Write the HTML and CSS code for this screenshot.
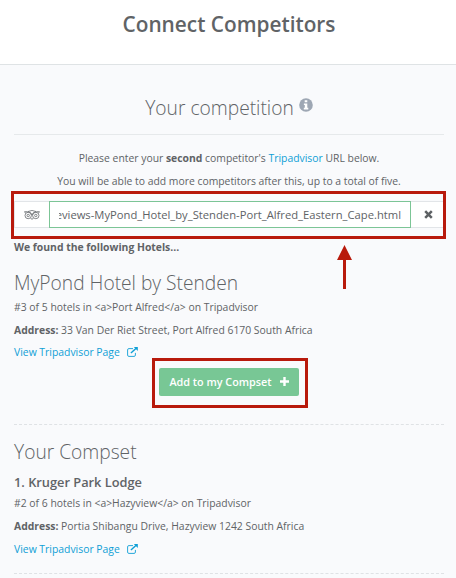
FILE: index.html
```html
<!DOCTYPE html>
<html lang="en">
<head>
<meta charset="utf-8">
<title>Connect Competitors</title>
<link rel="stylesheet" href="styles.css">
</head>
<body>
<svg class="defs" width="0" height="0" aria-hidden="true">
  <symbol id="external" viewBox="0 0 11 10">
    <path d="M6 1.6H1.9Q.6 1.6.6 2.9v5.2q0 1.3 1.3 1.3h5.2q1.3 0 1.3-1.3V5.9" fill="none" stroke="currentColor" stroke-width=".9"/>
    <path d="M3.9 6.1 9.2 1.2" fill="none" stroke="currentColor" stroke-width="1.4"/>
    <path d="M6.8 0h4v4z" fill="currentColor"/>
  </symbol>
</svg>
<header class="header"><h1 class="title">Connect Competitors</h1></header>
<main class="content">
  <h2 class="heading competition"><span>Your competition</span>
    <svg class="info" viewBox="0 0 14 14"><circle cx="7" cy="7" r="6.8" fill="#9ea7b4"/><path d="M5.7 2.3h2.6v2H5.7zM4.9 5.5h3.4v4.3h1v1.6H4.8V9.8h1V7h-.9z" fill="#fff"/></svg>
  </h2>
  <p class="text intro">Please enter your <b>second</b> competitor's <a class="link">Tripadvisor</a> URL below.</p>
  <p class="text intro">You will be able to add more competitors after this, up to a total of five.</p>
  <div class="url-row">
    <span class="addon owl">
      <svg width="16" height="10" viewBox="0 0 16 10" fill="none" stroke="#666a6d">
        <path d="M.5 1.7h3Q8-.8 12.5 1.7h3l-1 1.4M.5 1.7l1 1.4M4 1.7Q7.4 2.2 8 5.1 8.6 2.2 12 1.7M6.7 8 8 9.5 9.3 8" stroke-width=".8"/>
        <circle cx="4.2" cy="5.5" r="3.2" stroke-width=".8"/><circle cx="11.8" cy="5.5" r="3.2" stroke-width=".8"/>
        <circle cx="4.2" cy="5.5" r="1.2" stroke-width=".8"/><circle cx="11.8" cy="5.5" r="1.2" stroke-width=".8"/>
      </svg>
    </span>
    <div class="input"><div class="value"><span>eviews-MyPond_Hotel_by_Stenden-Port_Alfred_Eastern_Cape.html</span></div></div>
    <span class="addon clear">
      <svg width="9" height="9" viewBox="0 0 9 9"><path d="M1.2 1.2l6.6 6.6M7.8 1.2 1.2 7.8" stroke="#5d6164" stroke-width="2.5"/></svg>
    </span>
    <div class="mark mark-url"></div>
    <svg class="arrow" viewBox="0 0 15 44"><path d="M7.5 0 15 15H9v29H6V15H0z" fill="#b81a0c"/></svg>
  </div>
  <p class="text found"><b>We found the following Hotels...</b></p>
  <section class="hotel">
    <h2 class="heading">MyPond Hotel by Stenden</h2>
    <p class="text rank">#3 of 5 hotels in &lt;a&gt;Port Alfred&lt;/a&gt; on Tripadvisor</p>
    <p class="text address"><b>Address:</b> 33 Van Der Riet Street, Port Alfred 6170 South Africa</p>
    <p class="text view"><a class="link">View Tripadvisor Page</a><svg class="external"><use href="#external"/></svg></p>
    <div class="button-row">
      <div class="button-wrap">
        <button class="button">Add to my Compset<svg width="9" height="9" viewBox="0 0 9 9"><path d="M4.5 0v9M0 4.5h9" stroke="#fff" stroke-width="2.4"/></svg></button>
        <div class="mark mark-button"></div>
      </div>
    </div>
  </section>
  <section class="compset">
    <h2 class="heading">Your Compset</h2>
    <h3 class="name">1. Kruger Park Lodge</h3>
    <p class="text rank">#2 of 6 hotels in &lt;a&gt;Hazyview&lt;/a&gt; on Tripadvisor</p>
    <p class="text address"><b>Address:</b> Portia Shibangu Drive, Hazyview 1242 South Africa</p>
    <p class="text view"><a class="link">View Tripadvisor Page</a><svg class="external"><use href="#external"/></svg></p>
  </section>
</main>
</body>
</html>
```
FILE: styles.css
```css
* { box-sizing: border-box; }
body {
  margin: 0;
  height: 578px;
  overflow: hidden;
  background: #f9fafc;
  color: #606366;
  font-family: "Open Sans", sans-serif;
}
h1, h2, h3, p { margin: 0; white-space: nowrap; }
.defs { position: absolute; }
.header { height: 65px; background: #fff; border-bottom: 1px solid #dfe3e5; padding-top: 9px; }
.title { font-size: 20.8px; line-height: 30px; font-weight: 600; text-align: center; padding-left: 2px; }
.content { padding: 0 12px 0 14px; }
.heading { font-size: 19.2px; line-height: 28px; font-weight: 300; }
.competition {
  display: flex;
  justify-content: center;
  height: 70px;
  padding-top: 29px;
  gap: 5px;
  border-bottom: 1px solid #e6e9eb;
  margin-bottom: 12px;
}
.info { width: 14px; height: 14px; margin-top: 4px; }
.text { font-size: 10.38px; line-height: 23px; }
.intro { text-align: center; }
.link { color: #0f9fd6; }
.url-row { position: relative; display: flex; height: 27px; margin-top: 8px; }
.addon {
  display: flex;
  align-items: center;
  justify-content: center;
  width: 35px;
  background: #fff;
  border: 1px solid #e2e5e8;
}
.owl { border-right: 0; }
.clear { width: 33px; border-left: 0; padding-left: 3px; }
.input { flex: 1; min-width: 0; background: #fff; border: 1px solid #7cc596; padding: 0 9px; font-size: 11.22px; line-height: 26px; }
.value { display: flex; justify-content: flex-end; overflow: hidden; white-space: nowrap; }
.mark { position: absolute; border: 3px solid #b81a0c; }
.mark-url { left: -3px; top: -10px; width: 435px; height: 48px; }
.arrow { position: absolute; left: 323px; top: 44px; width: 15px; height: 44px; }
.found { padding-top: 8px; }
.hotel { height: 166px; padding-top: 10px; border-bottom: 1px dashed #dfe2e5; }
.rank { margin-top: -1px; }
.view { display: flex; align-items: center; }
.hotel .view { margin-top: -1px; }
.external { width: 11px; height: 10px; margin-left: 7px; margin-top: -1px; color: #0f9fd6; }
.button-row { display: flex; justify-content: center; margin-top: 4px; }
.button-wrap { position: relative; }
.button {
  display: flex;
  align-items: center;
  justify-content: center;
  gap: 8px;
  width: 140px;
  height: 28px;
  padding: 0 0 1px;
  border: 0;
  border-radius: 2px;
  background: #78c795;
  color: #fff;
  font: 600 10.8px "Open Sans", sans-serif;
  white-space: nowrap;
}
.mark-button { left: -7px; top: -10px; width: 156px; height: 50px; }
.compset { height: 149px; padding-top: 13px; border-bottom: 1px dashed #dfe2e5; }
.name { font-size: 12.8px; line-height: 22px; font-weight: 600; margin-top: 5px; }
```
